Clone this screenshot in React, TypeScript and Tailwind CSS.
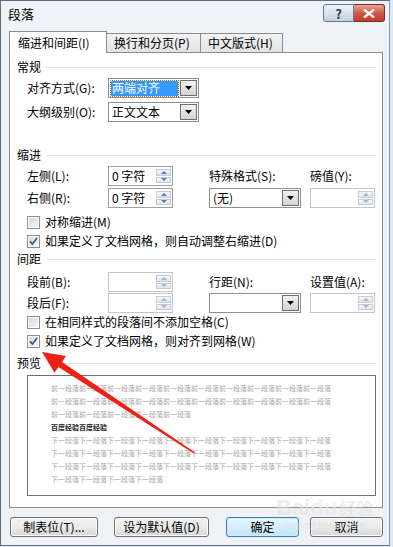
import React from "react";
import clsx from "clsx";

const FONT = "font-['SimSun','Noto_Sans_CJK_SC',sans-serif]";

const Heading = ({ text, className }: { text: string; className?: string }) => (
  <div className={clsx("flex items-center h-[16px] pr-[6px]", className)}>
    <span className="text-[12px] leading-none text-black">{text}</span>
    <div className="flex-1 h-px bg-[#d5dfe5] ml-[6px]" />
  </div>
);

const Label = ({ text, className }: { text: string; className?: string }) => (
  <div className={clsx("text-[12px] leading-none text-black whitespace-nowrap", className)}>{text}</div>
);

const DropArrow = () => (
  <div className="w-[17px] h-full flex items-center justify-center border border-[#707070] bg-gradient-to-b from-[#f2f2f2] to-[#d4d4d4]">
    <svg width="7" height="4" viewBox="0 0 7 4">
      <path d="M0 0H7L3.5 4Z" fill="#000" />
    </svg>
  </div>
);

const Select = ({ value, width, highlighted }: { value?: string; width: string; highlighted?: boolean }) => (
  <div className={clsx("h-[20px] border border-[#8e8f8f] bg-white flex items-stretch p-px", width)}>
    <div className="flex-1 flex items-center pl-[1px] pr-[2px]">
      {value && (
        <div
          className={clsx(
            "w-full h-[15px] flex items-center pl-[1px] text-[12px] leading-none",
            highlighted ? "bg-[#3399ff] text-white outline-1 outline-dotted outline-[#c96a00]" : "text-black"
          )}
        >
          {value}
        </div>
      )}
    </div>
    <DropArrow />
  </div>
);

const Spinner = ({ value, disabled }: { value?: string; disabled?: boolean }) => (
  <div
    className={clsx(
      "w-[65px] h-[20px] border bg-white flex items-stretch p-px",
      disabled ? "border-[#c5c5c5]" : "border-[#a0a0a0]"
    )}
  >
    <div className="flex-1 flex items-center pl-[2px] text-[12px] leading-none text-black">{value}</div>
    <div className="w-[15px] flex flex-col gap-px my-[1px]">
      {["M0 3L3 0L6 3Z", "M0 0H6L3 3Z"].map((d) => (
        <div
          key={d}
          className="flex-1 flex items-center justify-center border border-[#c4ccd6] bg-gradient-to-b from-[#f3f6f9] to-[#dfe6ee]"
        >
          <svg width="6" height="3" viewBox="0 0 6 3">
            <path d={d} fill={disabled ? "#a8b4c2" : "#5a7ea8"} />
          </svg>
        </div>
      ))}
    </div>
  </div>
);

const Checkbox = ({ text, checked, className }: { text: string; checked?: boolean; className?: string }) => (
  <div className={clsx("flex items-center h-[16px] pl-[10px]", className)}>
    <div className="w-[13px] h-[13px] border border-[#8e8f8f] bg-white p-px">
      <div className="w-full h-full bg-gradient-to-br from-[#d8d8d8] to-[#f6f6f6] flex items-center justify-center">
        {checked && (
          <svg width="9" height="9" viewBox="0 0 9 9">
            <path d="M1 4.5L3.5 7L8 1" stroke="#3b5d9a" strokeWidth="1.8" fill="none" />
          </svg>
        )}
      </div>
    </div>
    <span className="ml-[5px] text-[12px] leading-none text-black whitespace-nowrap">{text}</span>
  </div>
);

const PreviewLine = ({ text, times, dark }: { text: string; times: number; dark?: boolean }) => (
  <div
    className={clsx(
      "h-[13px] flex items-center text-[7px] leading-none whitespace-nowrap tracking-[0px]",
      dark ? "text-[#222] font-bold" : "text-[#a8a8a8]"
    )}
  >
    {text.repeat(times)}
  </div>
);

const Button = ({ text, width, focused }: { text: string; width: string; focused?: boolean }) => (
  <div
    className={clsx(
      "h-[20px] rounded-[3px] border flex items-center justify-center text-[12px] leading-none text-black",
      focused
        ? "border-[#3c7fb1] bg-gradient-to-b from-[#eaf6fd] to-[#bee6fd] shadow-[inset_0_0_0_1px_#cfeafc]"
        : "border-[#707070] bg-gradient-to-b from-[#f2f2f2] via-[#ebebeb] to-[#d6d6d6] shadow-[inset_0_0_0_1px_#fcfcfc]",
      width
    )}
  >
    {text}
  </div>
);

export default function App() {
  return (
    <div className={clsx("relative w-[393px] h-[547px] bg-[#dfe7f0] overflow-hidden", FONT)}>
      <div className="w-[390px] h-[546px] border border-[#5f6f82] border-r-[#7c9cbf] bg-[#eff2f6] flex flex-col">
        {/* Title bar */}
        <div className="h-[30px] flex items-start justify-between pl-[7px] pr-[4px] shrink-0">
          <div className="mt-[6px] text-[13px] leading-none text-black">段落</div>
          <div className="mt-[3px] flex">
            <div className="w-[31px] h-[18px] rounded-l-[3px] border border-[#6b7a8e] bg-gradient-to-b from-[#eef3f9] to-[#c3d1e2] flex items-center justify-center text-[13px] font-bold leading-none text-[#2c3e55]">
              ?
            </div>
            <div className="w-[31px] h-[18px] rounded-r-[3px] border border-l-0 border-[#7a2c22] bg-gradient-to-b from-[#e5a497] via-[#cf5a48] to-[#c23b28] flex items-center justify-center">
              <svg width="12" height="9" viewBox="0 0 12 9">
                <path d="M1 0.5L11 8.5M11 0.5L1 8.5" stroke="#fff" strokeWidth="2.4" />
              </svg>
            </div>
          </div>
        </div>

        {/* Tabs */}
        <div className="h-[21px] ml-[8px] flex items-end shrink-0">
          <div className="relative z-10 w-[98px] h-[22px] -mb-px border border-b-0 border-[#898c95] bg-white flex items-center pl-[8px] text-[12px] leading-none text-black">
            缩进和间距(I)
          </div>
          <div className="w-[94px] h-[19px] border border-l-0 border-b-0 border-[#898c95] bg-gradient-to-b from-[#f3f3f3] to-[#e3e3e3] flex items-center pl-[7px] text-[12px] leading-none text-black">
            换行和分页(P)
          </div>
          <div className="w-[82px] h-[19px] border border-l-0 border-b-0 border-[#898c95] bg-gradient-to-b from-[#f3f3f3] to-[#e3e3e3] flex items-center pl-[7px] text-[12px] leading-none text-black">
            中文版式(H)
          </div>
        </div>

        {/* Panel */}
        <div className="ml-[8px] w-[374px] h-[456px] border border-[#898c95] bg-white pl-[7px] shrink-0">
          <Heading text="常规" className="mt-[6px]" />
          <div className="mt-[3px] flex items-center">
            <Label text="对齐方式(G):" className="w-[91px] pl-[10px]" />
            <Select value="两端对齐" width="w-[91px]" highlighted />
          </div>
          <div className="mt-[4px] flex items-center">
            <Label text="大纲级别(O):" className="w-[91px] pl-[10px]" />
            <Select value="正文文本" width="w-[91px]" />
          </div>

          <Heading text="缩进" className="mt-[25px]" />
          <div className="mt-[3px] flex items-center">
            <Label text="左侧(L):" className="w-[91px] pl-[10px]" />
            <Spinner value="0 字符" />
            <Label text="特殊格式(S):" className="ml-[36px] w-[101px]" />
            <Label text="磅值(Y):" />
          </div>
          <div className="mt-[2px] flex items-center">
            <Label text="右侧(R):" className="w-[91px] pl-[10px]" />
            <Spinner value="0 字符" />
            <div className="ml-[36px]">
              <Select value="(无)" width="w-[92px]" />
            </div>
            <div className="ml-[9px]">
              <Spinner disabled />
            </div>
          </div>
          <Checkbox text="对称缩进(M)" className="mt-[6px]" />
          <Checkbox text="如果定义了文档网格，则自动调整右缩进(D)" checked className="mt-[3px]" />

          <Heading text="间距" className="mt-[2px]" />
          <div className="mt-[5px] flex items-center">
            <Label text="段前(B):" className="w-[91px] pl-[10px]" />
            <Spinner disabled />
            <Label text="行距(N):" className="ml-[36px] w-[101px]" />
            <Label text="设置值(A):" />
          </div>
          <div className="mt-[1px] flex items-center">
            <Label text="段后(F):" className="w-[91px] pl-[10px]" />
            <Spinner disabled />
            <div className="ml-[36px]">
              <Select width="w-[92px]" />
            </div>
            <div className="ml-[9px]">
              <Spinner disabled />
            </div>
          </div>
          <Checkbox text="在相同样式的段落间不添加空格(C)" className="mt-[1px]" />
          <Checkbox text="如果定义了文档网格，则对齐到网格(W)" checked className="mt-[3px]" />

          <Heading text="预览" className="mt-[6px]" />
          <div className="mt-[4px] ml-[10px] w-[349px] h-[121px] border border-[#6f6f6f] bg-white pl-[23px] pt-[6px]">
            <PreviewLine text="前一段落" times={10} />
            <PreviewLine text="前一段落" times={10} />
            <PreviewLine text="前一段落" times={5} />
            <PreviewLine text="百度经验" times={2} dark />
            <PreviewLine text="下一段落" times={10} />
            <PreviewLine text="下一段落" times={10} />
            <PreviewLine text="下一段落" times={10} />
            <PreviewLine text="下一段落" times={4} />
          </div>
        </div>

        {/* Bottom buttons */}
        <div className="mt-[9px] ml-[9px] flex items-center">
          <Button text="制表位(T)..." width="w-[88px]" />
          <div className="ml-[16px]">
            <Button text="设为默认值(D)" width="w-[95px]" />
          </div>
          <div className="ml-[17px]">
            <Button text="确定" width="w-[73px]" focused />
          </div>
          <div className="ml-[11px]">
            <Button text="取消" width="w-[73px]" />
          </div>
        </div>
      </div>

      {/* Watermark */}
      <div className="absolute left-[276px] top-[497px] pointer-events-none flex flex-col items-center opacity-60">
        <div className="text-[22px] font-bold leading-none text-[#e2e2e2] font-['Liberation_Sans',sans-serif]">
          Bai<span className="text-[#e8e8e8]">du</span>
          <span className="ml-[2px] text-[17px] font-['Noto_Sans_CJK_SC',sans-serif]">经验</span>
        </div>
        <div className="mt-[2px] text-[10px] leading-none text-[#dcdcdc] font-['Liberation_Sans',sans-serif]">
          jingyan.baidu.com
        </div>
      </div>

      {/* Red annotation arrow */}
      <svg className="absolute left-0 top-0 pointer-events-none" width="393" height="547" viewBox="0 0 393 547">
        <polygon
          points="42,352 66,356 62,362 195,452.5 193.8,453.6 58.4,366.9 54.6,372.8"
          fill="#ee2118"
        />
      </svg>
    </div>
  );
}
